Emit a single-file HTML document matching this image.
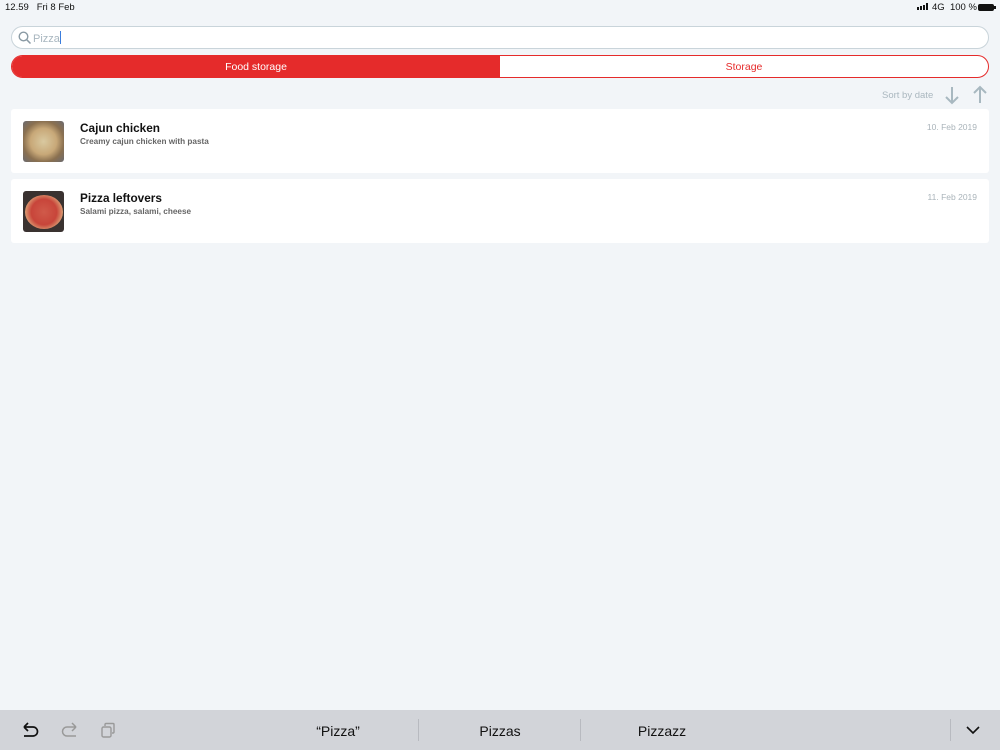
<!DOCTYPE html>
<html><head><meta charset="utf-8"><style>
*{box-sizing:border-box;margin:0;padding:0}
body{width:1000px;height:750px;background:#f2f5f8;font-family:"Liberation Sans",sans-serif;position:relative;overflow:hidden}
.abs{position:absolute}
.search{left:11px;top:26px;width:978px;height:23px;border:1px solid #c9d4da;border-radius:12px;background:#fff}
.seg{left:11px;top:55px;width:978px;height:23px;border:1px solid #e52b2b;border-radius:12px;overflow:hidden;display:flex;background:#fff}
.seg div{flex:1;text-align:center;font-size:10.5px;line-height:23px;color:#e52b2b}
.seg .on{background:#e52b2b;color:#fff}
.card{left:11px;width:978px;height:64px;background:#fff;border-radius:3px}
.thumb{position:absolute;left:12px;top:12px;width:41px;height:41px;border-radius:3px}
.t{position:absolute;left:69px;top:12px;font-weight:bold;font-size:11.8px;color:#111}
.s{position:absolute;left:69px;top:28px;font-weight:bold;font-size:8.2px;color:#666}
.d{position:absolute;right:12px;top:13px;font-size:8.5px;color:#aab4ba}
.kb{left:0;top:710px;width:1000px;height:40px;background:#d2d4d9}
.kb span{position:absolute;top:13px;font-size:14px;color:#111;transform:translateX(-50%)}
.sep{position:absolute;top:9px;width:1px;height:22px;background:#b8bac0}
</style></head><body>
<div class="abs" style="left:5px;top:2px;font-size:9.5px;color:#111">12.59&nbsp;&nbsp;&nbsp;Fri 8 Feb</div>
<div class="abs" style="left:917px;top:3px;display:flex;align-items:flex-end;gap:1px">
<i style="width:2px;height:3px;background:#111"></i><i style="width:2px;height:4px;background:#111"></i><i style="width:2px;height:5px;background:#111"></i><i style="width:2px;height:7px;background:#111"></i></div>
<div class="abs" style="left:932px;top:2px;font-size:9.5px;color:#111">4G&nbsp; 100 %</div>
<div class="abs" style="left:978px;top:4px;width:16px;height:7px;background:#111;border-radius:2px"></div>
<div class="abs" style="left:994px;top:6px;width:1.5px;height:3px;background:#111"></div>
<div class="abs search">
<svg class="abs" style="left:6px;top:4px" width="14" height="14" viewBox="0 0 14 14"><circle cx="5.5" cy="5.5" r="4.3" fill="none" stroke="#8a9aa4" stroke-width="1.4"/><path d="M8.7 8.7L12.5 12.5" stroke="#8a9aa4" stroke-width="1.5"/></svg>
<div class="abs" style="left:21px;top:4px;font-size:11px;color:#a8b6bf">Pizza<span style="display:inline-block;width:1px;height:13px;background:#3b7ddd;vertical-align:-2px"></span></div>
</div>
<div class="abs seg"><div class="on">Food storage</div><div>Storage</div></div>
<div class="abs" style="left:882px;top:90px;font-size:9.5px;color:#aab7bf">Sort by date</div>
<svg class="abs" style="left:944px;top:85px" width="16" height="20" viewBox="0 0 16 20"><path d="M8 2V18M2 12L8 18L14 12" fill="none" stroke="#a8b8c0" stroke-width="2"/></svg>
<svg class="abs" style="left:972px;top:85px" width="16" height="20" viewBox="0 0 16 20"><path d="M8 18V2M2 8L8 2L14 8" fill="none" stroke="#a8b8c0" stroke-width="2"/></svg>
<div class="abs card" style="top:109px">
<div class="thumb" style="background:radial-gradient(circle at 50% 50%,#d9c9a0 0,#c8a878 45%,#8a7050 70%,#6a6a70 100%)"></div>
<div class="t">Cajun chicken</div><div class="s">Creamy cajun chicken with pasta</div><div class="d">10. Feb 2019</div></div>
<div class="abs card" style="top:179px">
<div class="thumb" style="background:#3a3230"><div style="position:absolute;left:2px;top:4px;width:38px;height:34px;border-radius:50%;background:radial-gradient(circle,#d05a4a 0,#c8453a 50%,#e0b080 80%,#9a6a40 100%)"></div></div>
<div class="t">Pizza leftovers</div><div class="s">Salami pizza, salami, cheese</div><div class="d">11. Feb 2019</div></div>
<div class="abs kb">
<svg class="abs" style="left:20px;top:12px" width="20" height="16" viewBox="0 0 20 16"><path d="M4 5H13a4.5 4.5 0 0 1 0 9H4M4 5L8 1M4 5L8 9" fill="none" stroke="#111" stroke-width="1.7"/></svg>
<svg class="abs" style="left:60px;top:12px" width="20" height="16" viewBox="0 0 20 16"><path d="M16 5H7a4.5 4.5 0 0 0 0 9H16M16 5L12 1M16 5L12 9" fill="none" stroke="#999" stroke-width="1.5"/></svg>
<svg class="abs" style="left:100px;top:12px" width="16" height="16" viewBox="0 0 16 16"><rect x="2" y="5" width="9" height="10" rx="1.5" fill="none" stroke="#999" stroke-width="1.4"/><path d="M5 4V2.5A1 1 0 0 1 6 1.5H13A1 1 0 0 1 14 2.5V10A1 1 0 0 1 13 11H12" fill="none" stroke="#999" stroke-width="1.4"/></svg>
<span style="left:338px">“Pizza”</span><div class="sep" style="left:418px"></div>
<span style="left:500px">Pizzas</span><div class="sep" style="left:580px"></div>
<span style="left:662px">Pizzazz</span><div class="sep" style="left:950px"></div>
<svg class="abs" style="left:965px;top:15px" width="16" height="10" viewBox="0 0 16 10"><path d="M2 2L8 8L14 2" fill="none" stroke="#111" stroke-width="1.6"/></svg>
</div>
</body></html>
